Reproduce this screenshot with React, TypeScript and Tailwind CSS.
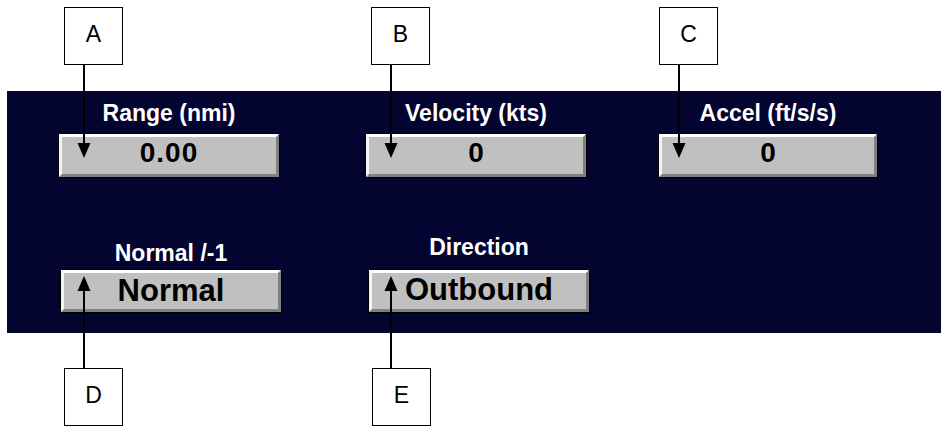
import React from "react";

interface Control {
  label: string;
  value: string;
  width: string;
  margin: string;
  labelGap: string;
  valueClass: string;
}

const topRow: Control[] = [
  { label: "Range (nmi)", value: "0.00", width: "w-[222px]", margin: "ml-[51px]", labelGap: "mb-[8px]", valueClass: "text-[28px] tracking-[1px] pb-[5px]" },
  { label: "Velocity (kts)", value: "0", width: "w-[222px]", margin: "ml-[85px]", labelGap: "mb-[8px]", valueClass: "text-[28px] pb-[5px]" },
  { label: "Accel (ft/s/s)", value: "0", width: "w-[220px]", margin: "ml-[71px]", labelGap: "mb-[8px]", valueClass: "text-[28px] pb-[5px]" },
];

const bottomRow: Control[] = [
  { label: "Normal /-1", value: "Normal", width: "w-[222px]", margin: "ml-[53px]", labelGap: "mb-[4px]", valueClass: "text-[31px] pb-[1px]" },
  { label: "Direction", value: "Outbound", width: "w-[222px]", margin: "ml-[86px]", labelGap: "mb-[10px]", valueClass: "text-[31px] pb-[4px]" },
];

// callout boxes sit on top of the panel like annotations
const callouts = [
  { letter: "A", cls: "left-[64px] top-[7px]" },
  { letter: "B", cls: "left-[371px] top-[7px]" },
  { letter: "C", cls: "left-[659px] top-[7px]" },
  { letter: "D", cls: "left-[64px] top-[368px]" },
  { letter: "E", cls: "left-[372px] top-[368px]" },
];

function BevelButton({ c, h }: { c: Control; h: string }) {
  return (
    <div className={`${c.width} ${h} border border-black bg-black`}>
      <div
        className={`h-full w-full flex items-center justify-center bg-[#c0c0c0] border-t-[3px] border-l-[3px] border-t-white border-l-[#f4f4f4] border-b-[3px] border-r-[3px] border-b-[#808080] border-r-[#808080] font-bold text-black leading-none ${c.valueClass}`}
      >
        {c.value}
      </div>
    </div>
  );
}

function Field({ c, h }: { c: Control; h: string }) {
  return (
    <div className={`${c.margin} flex flex-col items-center`}>
      <div className={`text-[23px] leading-[23px] font-bold text-white ${c.labelGap}`}>
        {c.label}
      </div>
      <BevelButton c={c} h={h} />
    </div>
  );
}

export default function App() {
  return (
    <div
      className="relative w-[941px] h-[426px] bg-white overflow-hidden"
      style={{ fontFamily: '"Liberation Sans", Arial, sans-serif' }}
    >
      <div className="pt-[91px] pl-[7px]">
        <div className="h-[242px] bg-[#000048] bg-[image:repeating-conic-gradient(#00006e_0%_25%,#00002c_0%_50%)] bg-[length:2px_2px] pt-[11px]">
          <div className="flex items-end">
            {topRow.map((c) => (
              <Field key={c.label} c={c} h="h-[45px]" />
            ))}
          </div>
          <div className="flex items-end mt-[58px]">
            {bottomRow.map((c) => (
              <Field key={c.label} c={c} h="h-[44px]" />
            ))}
          </div>
        </div>
      </div>

      {/* connector lines and arrowheads */}
      <svg className="absolute left-0 top-0" width="941" height="426">
        <g stroke="black" strokeWidth="2">
          <line x1="84" y1="65" x2="84" y2="145" />
          <line x1="391" y1="65" x2="391" y2="145" />
          <line x1="679" y1="65" x2="679" y2="145" />
          <line x1="84" y1="289" x2="84" y2="368" />
          <line x1="391" y1="289" x2="391" y2="368" />
        </g>
        <g fill="black">
          <polygon points="77.5,143 90.5,143 84,158" />
          <polygon points="384.5,143 397.5,143 391,158" />
          <polygon points="672.5,143 685.5,143 679,158" />
          <polygon points="77.5,291 90.5,291 84,276" />
          <polygon points="384.5,291 397.5,291 391,276" />
        </g>
      </svg>

      {callouts.map((b) => (
        <div
          key={b.letter}
          className={`absolute ${b.cls} w-[59px] h-[58px] border border-black bg-white flex items-center justify-center pb-[4px] text-[23px] text-black`}
        >
          {b.letter}
        </div>
      ))}
    </div>
  );
}
